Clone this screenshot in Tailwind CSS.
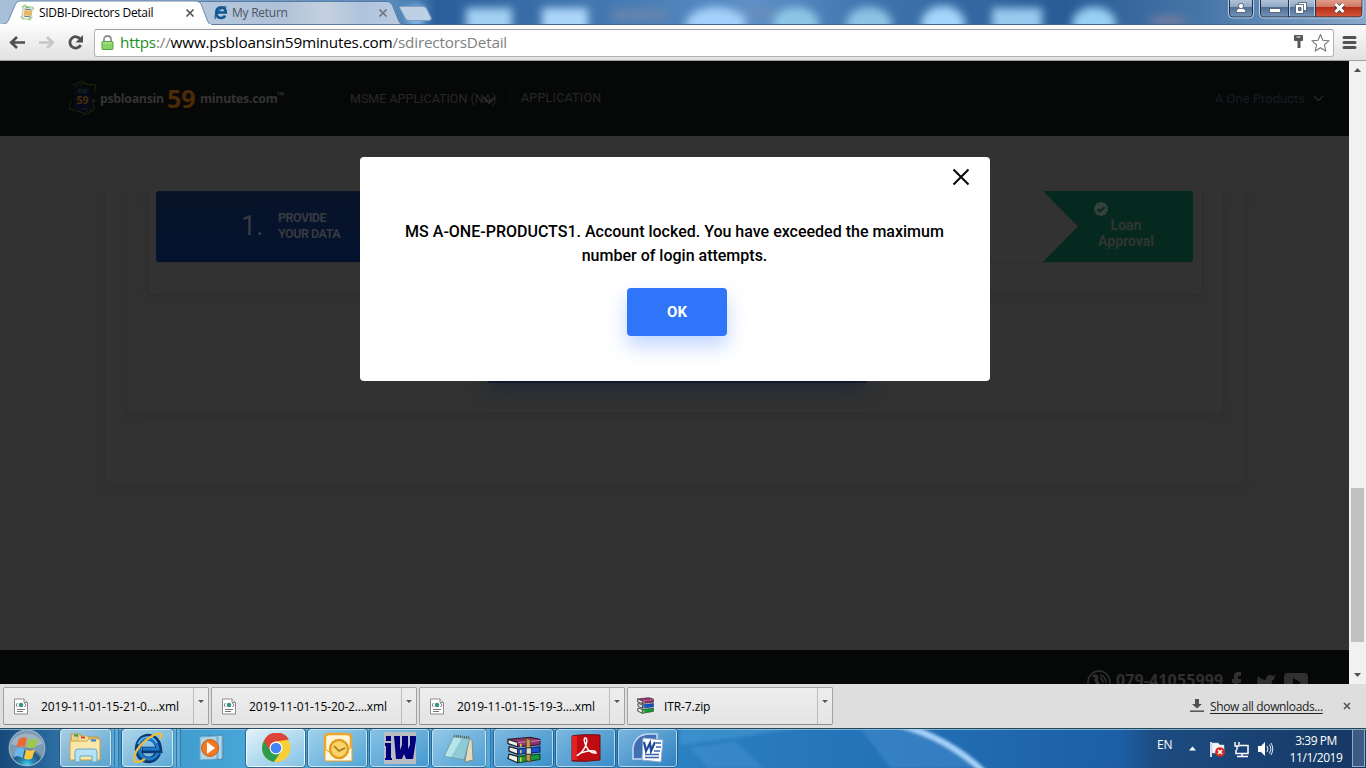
<!DOCTYPE html>
<html lang="en">
<head>
<meta charset="utf-8">
<title>SIDBI-Directors Detail</title>
<script src="https://cdn.jsdelivr.net/npm/@tailwindcss/browser@4"></script>
</head>
<body class="w-[1366px] h-[768px] overflow-hidden flex flex-col font-['Open_Sans','Noto_Sans',sans-serif] text-black">

<!-- window title bar -->
<header class="relative h-[25px] shrink-0 overflow-hidden bg-linear-to-r from-[#8fb0d0] via-[#3c72ac] to-[#4f80b4]">
  <svg class="absolute inset-0" width="1366" height="25" viewBox="0 0 1366 25">
    <defs>
      <filter id="soft" x="-30%" y="-80%" width="160%" height="260%"><feGaussianBlur stdDeviation="4.500"/></filter>
      <linearGradient id="tb" x1="0" x2="1"><stop offset="0" stop-color="#a8c0d8"/><stop offset=".29" stop-color="#5688ba"/><stop offset=".32" stop-color="#2b5f9b"/><stop offset=".45" stop-color="#4579b2"/><stop offset=".55" stop-color="#5d8fc6"/><stop offset=".64" stop-color="#3f74ad"/><stop offset=".78" stop-color="#295b95"/><stop offset=".88" stop-color="#4675a8"/><stop offset="1" stop-color="#8aa9c9"/></linearGradient>
      <linearGradient id="tab2" x1="0" x2="1"><stop offset="0" stop-color="#b4c8dd"/><stop offset=".4" stop-color="#afc1d8"/><stop offset=".62" stop-color="#c4d0df"/><stop offset=".8" stop-color="#afc3dd"/><stop offset="1" stop-color="#b8cbe0"/></linearGradient>
      <linearGradient id="btn" x1="0" x2="0" y1="0" y2="1"><stop offset="0" stop-color="#b5c6da"/><stop offset=".42" stop-color="#91a9c5"/><stop offset=".45" stop-color="#4f6e96"/><stop offset="1" stop-color="#7795b9"/></linearGradient>
      <linearGradient id="cls" x1="0" x2="0" y1="0" y2="1"><stop offset="0" stop-color="#e2a08e"/><stop offset=".42" stop-color="#d07a66"/><stop offset=".45" stop-color="#b52c18"/><stop offset="1" stop-color="#d4583a"/></linearGradient>
    </defs>
    <rect width="1366" height="25" fill="url(#tb)"/>
    <g filter="url(#soft)">
      <rect x="408" y="5" width="16" height="22" fill="#88bff0"/>
      <rect x="466" y="8" width="46" height="28" fill="#a2d0f2"/>
      <rect x="542" y="8" width="46" height="28" fill="#acd5fa"/>
      <rect x="612" y="9" width="54" height="12" fill="#6585ae"/>
      <rect x="740" y="9" width="36" height="8" fill="#6b8fb9"/>
      <ellipse cx="716" cy="24" rx="30" ry="17" fill="#a3d0fa"/>
      <ellipse cx="796" cy="24" rx="23" ry="17" fill="#8cc6e6"/>
      <ellipse cx="869" cy="24" rx="23" ry="17" fill="#8cc2e4"/>
      <ellipse cx="943" cy="24" rx="22" ry="18" fill="#a5d5fb"/>
      <rect x="992" y="8" width="50" height="28" fill="#9acaf0"/>
      <ellipse cx="1094" cy="24" rx="22" ry="17" fill="#98d0f4"/>
      <ellipse cx="1168" cy="21" rx="20" ry="6" fill="#6d7ba0"/>
    </g>
    <path d="M0 24.500H1366" stroke="#47658a"/>
    <path d="M400 6.500H423q3 0 4 3l4 8q1 3-2 3H409q-3 0-4-3l-5-9q-1-2 0-2z" fill="#bdd0e5" stroke="#7f9fbe"/>
    <path d="M199 1.500H387q4 0 5.500 4l6.500 16q1.500 3 4 3H207L199 2z" fill="url(#tab2)" stroke="#5c7da3"/>
    <path d="M0 25v-.5h2q5 0 6.500-4L15 5q1.500-4 5-4H196q4 0 5.500 4l6 16q1.500 4 5 4z" fill="#fff" stroke="#6e8cad"/>
    <rect x="0" y="24" width="211" height="1" fill="#fcfcfc"/>
    <!-- site favicon -->
    <g transform="rotate(8 27 13)" fill="none"><rect x="22.500" y="6.500" width="9" height="12.500" fill="#f4f7ef" stroke="#a5cd95"/><path d="M21 8l4-3M33 9l-1-3M21 17l4 3M33 16l-4 4" stroke="#9acb87"/><rect x="24" y="10.500" width="7" height="5" fill="#f3b25e"/><path d="M24 9.500h7M24 16.500h7" stroke="#68708a"/><path d="M24.500 7.500h5" stroke="#70b46f"/></g>
    <!-- Internet Explorer favicon -->
    <path d="M225 15.500q-1 2.500-4 2.500-4.500 0-4.800-5.500 .3-5 5-5.100 4.300 0 4.600 5.100h-9" fill="none" stroke="#12568e" stroke-width="2.600"/>
    <path d="M215.500 19q-2-3 3-8 5-5 8-4" fill="none" stroke="#12568e" stroke-width="1.200"/>
    <path d="M186.500 9.500l7 7m0-7l-7 7" stroke="#555" stroke-width="1.700"/>
    <path d="M379.500 9.500l7 7m0-7l-7 7" stroke="#6c7480" stroke-width="1.700"/>
    <!-- window buttons -->
    <g stroke="#22344c">
      <path d="M1229.500-1V14q0 3 3 3h17q3 0 3-3V-1z" fill="url(#btn)"/>
      <path d="M1260.500-1V14q0 3 3 3H1289V-1z" fill="url(#btn)"/>
      <path d="M1288.500-1V17H1315.500V-1z" fill="url(#btn)"/>
      <path d="M1315.500-1V17H1359q3 0 3-3V-1z" fill="url(#cls)"/>
    </g>
    <path d="M1228.500 0V14q0 4 4 4h17q4 0 4-4V0M1259.500 0V14q0 4 4 4h95q4 0 4.500-4V0M1289.500 0V16M1314.500 0V16" fill="none" stroke="#d8e6f3" stroke-opacity=".75"/>
    <g fill="#fff" stroke="#47566c" stroke-width=".8"><path d="M1236.500 12.500v-2q1-2.500 4.500-2.500t4.500 2.500v2z"/><circle cx="1241" cy="6" r="2.600"/><rect x="1269.500" y="8.500" width="11" height="4"/><path d="M1298.500 2.500h8v8h-8z"/><path d="M1295.500 4.500h8v9h-8z"/><path d="M1298.500 7.500h2.500v3h-2.500z" fill="#5c7698"/></g>
    <path d="M1335.500 4.500l8 7.500m0-7.500l-8 7.500" stroke="#514047" stroke-width="4.600"/><path d="M1335.500 4l8 8m0-8l-8 8" stroke="#fff" stroke-width="2.900"/>
  </svg>
  <div class="relative flex items-center h-[25px] text-[12px] leading-[25px] whitespace-nowrap">
    <span class="ml-[39px] w-[193px] tracking-[-0.28px]">SIDBI-Directors Detail</span>
    <span class="text-[#4d5560] tracking-[-0.25px]">My Return</span>
  </div>
</header>

<!-- address toolbar -->
<div class="h-[36px] shrink-0 flex items-center bg-linear-to-b from-[#fcfcfc] to-[#e1e1e1] border-b border-[#a0a0a0]">
  <svg width="94" height="35" viewBox="0 0 94 35" fill="none">
    <path d="M25 17.500H12M17 12l-5.800 5.500L17 23" stroke="#505050" stroke-width="2.700"/>
    <path d="M39 17.500H52M47 12l5.800 5.500L47 23" stroke="#c6c6c6" stroke-width="2.700"/>
    <path d="M80.500 14.500A5.700 5.700 0 1 0 80.700 20" stroke="#505050" stroke-width="2.800"/><path d="M83 10v7.500h-7.500z" fill="#505050"/>
  </svg>
  <div class="w-[1240px] h-[28px] flex items-center bg-white border border-[#b4b4b4] border-t-[#9c9c9c] rounded-[3px]">
    <svg class="ml-[6px] mr-[6px]" width="13" height="18" viewBox="0 0 13 18"><path d="M3 8V5.500Q3 2 6.500 2T10 5.500V8" fill="none" stroke="#929292" stroke-width="1.800"/><rect x="1" y="7.500" width="11" height="8" rx=".8" fill="#8bd267" stroke="#57a33f"/><path d="M2 9h9" stroke="#b8e99e"/></svg>
    <div class="flex-1 -mt-[2px] text-[15.300px] leading-[26px] tracking-[-0.2px] whitespace-nowrap text-[#808080]"><span class="text-[#1b911b]">https</span>://<span class="text-black">www.psbloansin59minutes.com</span>/sdirectorsDetail</div>
    <svg class="mr-[-1px]" width="42" height="26" viewBox="0 0 42 26"><path d="M2 6q0-1 1-1h7q1 0 1 1v4q0 1-1 1H8.500v7h-3v-7H3q-1 0-1-1z" fill="#555"/><path d="M4.500 7h4" stroke="#fff"/><path d="M28.500 4.500l2.400 5.700 6.200.5-4.700 4.100 1.400 6.200-5.300-3.300-5.300 3.300 1.400-6.200-4.700-4.100 6.200-.5z" fill="#fff" stroke="#777" stroke-width="1.100" stroke-linejoin="round"/></svg>
  </div>
  <svg width="32" height="35" viewBox="0 0 32 35"><path d="M10 12.500H21M10 17.500H21M10 22.500H21" stroke="#525252" stroke-width="3" stroke-linecap="round"/></svg>
</div>

<!-- web page under the dimming overlay -->
<div class="relative h-[623px] shrink-0 flex font-[Roboto,sans-serif]">
  <main class="w-[1349px] flex flex-col bg-[#323232] overflow-hidden">
    <nav class="h-[75px] shrink-0 bg-[#060807] flex items-center text-[12.500px] text-[#28272b] whitespace-nowrap">
      <svg class="ml-[68px]" width="30" height="40" viewBox="0 0 30 40" fill="none"><g stroke="#17250f"><path d="M4 6L15 2l2 3 11 1-2 8M3 22l-2 8 12 3 3 3 10-5-1-8"/><path d="M6 8l9-4 10 3M4 30l12 4 8-4" stroke-dasharray="2 1"/></g><rect x="6.500" y="8" width="16" height="24" rx="2" fill="#080a19"/><path d="M14 30h6" stroke="#0d2213" stroke-width="1.500"/><path d="M24 20l3 3m0-3l-3 3" stroke="#27351e"/><text x="10" y="13.500" font-size="5" font-weight="700" fill="#102d17" font-family="Open Sans">PSB</text><text x="8.500" y="25" font-size="10.500" font-weight="700" fill="#4b2c09" font-family="Open Sans">59</text></svg>
      <div class="mt-[2px] flex items-center font-['Open_Sans',sans-serif] font-bold text-[12.300px] text-[#343436]">
        <span class="ml-[2px] w-[67px] tracking-[-0.27px]">psbloansin</span>
        <span class="w-[33px] -mt-[4px] text-[25px] leading-[30px] text-[#4b2b06]">59</span>
        <span class="w-[77px] tracking-[-0.25px]">minutes.com</span><span class="text-[10px] -mt-[8px] w-[10px]">™</span>
      </div>
      <div class="ml-[63px] mt-[2px] w-[161px] flex items-center border-r border-[#0c0e0d]"><span class="w-[131px]">MSME APPLICATION (NA)</span><svg width="16" height="10" viewBox="0 0 16 10"><path d="M2 2l6 6 6-6" fill="none" stroke="#2f2f31" stroke-width="1.600"/></svg></div>
      <span class="ml-[10px] -mt-[1px] tracking-[0.22px]">APPLICATION</span>
      <span class="ml-auto text-[13px] text-[#191b25]">A One Products</span>
      <svg class="ml-[7px] mr-[24px]" width="13" height="9" viewBox="0 0 13 9"><path d="M2 2l4.500 4.500L11 2" fill="none" stroke="#25272d" stroke-width="1.300"/></svg>
    </nav>

    <section class="mt-[55px] h-[459px] shrink-0 overflow-hidden">
      <div class="ml-[105px] w-[1140px] h-[294px] px-[20px] border border-t-0 border-[#2e2e2e] rounded-b-[4px] shadow-[0_3px_9px_#303030]">
        <div class="h-[223px] w-[1098px] px-[20px] border border-t-0 border-[#2d2d2d] rounded-b-[4px] shadow-[0_3px_9px_#303030] flex flex-col">
          <div class="h-[104px] w-[1056px] px-[8px] border border-t-0 border-[#2c2c2c] rounded-b-[4px] shadow-[0_3px_9px_#303030]">
            <div class="h-[72px] w-[1037px] flex items-stretch border-b border-[#2c2c2c] text-[#373a40]">
              <div class="w-[300px] h-[71px] pl-[85px] flex items-center rounded-[3px] bg-linear-to-b from-[#081328] to-[#04122e]">
                <span class="w-[37px] text-[27px] leading-[30px] -mt-px">1.</span>
                <span class="-mt-[2px] text-[12.500px] leading-[16px] font-bold tracking-[-0.5px]">PROVIDE<br>YOUR DATA</span>
              </div>
              <div class="relative ml-auto w-[150px] h-[71px] pt-[10px] pl-[50px] text-[#303532]">
                <svg class="absolute left-0 top-0" width="150" height="71" viewBox="0 0 150 71"><path d="M0 0H147q3 0 3 3V68q0 3-3 3H0L35 35.500z" fill="#05291e"/></svg>
                <svg class="relative" width="16" height="16" viewBox="0 0 16 16"><circle cx="8" cy="8" r="6.500" fill="#34423d" stroke="#34423d" stroke-width="1.200" stroke-dasharray="3 1"/><path d="M4.500 8l2.500 2.500 4.500-4.500" fill="none" stroke="#05291e" stroke-width="1.800"/></svg>
                <div class="relative w-[66px] text-center text-[14px] leading-[16px] font-bold">Loan<br>Approval</div>
              </div>
            </div>
          </div>
          <div class="mt-[38px] ml-[341px] w-[378px] h-[50px] bg-[#0d1a30] shadow-[0_8px_20px_#222a36]"></div>
        </div>
      </div>
    </section>

    <footer class="h-[34px] shrink-0 bg-[#060807] overflow-hidden flex items-start pl-[1086px] text-[#2f2f30]">
      <svg class="mt-[19px] shrink-0" width="27" height="26" viewBox="0 0 27 26" fill="none" stroke="#303030"><circle cx="13" cy="13" r="11" stroke-width="1.500"/><path d="M7 8q3-3 4 1l-1 2q1 4 5 6" stroke-width="3"/><path d="M14 6q6 1 6 8M14 9q3 1 3 5" stroke-width="1.400"/></svg>
      <span class="ml-[3px] mt-[19px] text-[16px] leading-[22px] font-bold font-['Open_Sans',sans-serif] w-[114px] tracking-[0.12px]">079-41055999</span>
      <svg class="mt-[21px] shrink-0" width="80" height="26" viewBox="0 0 80 26" fill="#303030"><path d="M11 1H8Q4 1 4 5v3H2v4h2v9h4v-9h3V8H8V5h3zM28 5q4 4 8 4 0-5 4-5 2 0 3 1l3-1-2 3h1l-3 3q-1 12-15 10l4-3-3-3-1-3z"/><path fill-rule="evenodd" d="M58 2H74q4 0 4 4V18q0 4-4 4H58q-4 0-4-4V6q0-4 4-4zM63 7v9l8-4.500z"/></svg>
    </footer>
  </main>

  <!-- page scrollbar -->
  <aside class="w-[17px] bg-[#f1f1f1] flex flex-col items-center">
    <svg class="mt-[6px]" width="9" height="6" viewBox="0 0 9 6"><path d="M4.500 1L8 5H1z" fill="#505050"/></svg>
    <div class="mt-[415px] w-[13px] h-[154px] bg-[#c1c1c1]"></div>
    <svg class="mt-[30px]" width="9" height="6" viewBox="0 0 9 6"><path d="M4.500 5L8 1H1z" fill="#505050"/></svg>
  </aside>

  <!-- account locked dialog -->
  <div role="dialog" class="absolute left-[360px] top-[96px] w-[630px] h-[224px] bg-white rounded-[4px] flex flex-col items-center">
    <button aria-label="Close" class="self-end mt-[11px] mr-[20px] h-[18px]"><svg width="18" height="18" viewBox="0 0 18 18"><path d="M1.500 1.500l15 15m0-15l-15 15" stroke="#080808" stroke-width="2"/></svg></button>
    <p class="mt-[34px] mr-[1px] w-[560px] h-[48px] text-center text-[16px] leading-[24px] font-medium text-black">MS A-ONE-PRODUCTS1. Account locked. You have exceeded the maximum<br>number of login attempts.</p>
    <button class="mt-[20px] ml-[4px] w-[100px] h-[48px] rounded-[4px] bg-[#2e75fa] text-white font-bold text-[15px] shadow-[0_10px_20px_rgba(46,117,250,0.3)]">OK</button>
  </div>
</div>

<!-- downloads shelf -->
<div class="h-[44px] shrink-0 bg-[#dedede] flex items-center pl-[3px] text-[12px] whitespace-nowrap">
  <svg class="absolute" width="0" height="0"><defs>
    <symbol id="xml" viewBox="0 0 16 17"><path d="M1.500 1h9.500l3.500 3.500V16h-13z" fill="#fff" stroke="#8b8b8b"/><path d="M11 1v3.500h3.500" fill="#eee" stroke="#8b8b8b"/><path d="M4.500 5L3 7l1.500 2M11.500 5L13 7l-1.500 2" fill="none" stroke="#777"/><circle cx="8" cy="7" r="2.300" fill="#3a8f88"/><path d="M4 11.500h8M4 13.500h6" stroke="#777"/></symbol>
    <symbol id="rar" viewBox="0 0 32 26" preserveAspectRatio="none"><path d="M1 3L22 1l9 2v5L10 10 1 7z" fill="#8d3470" stroke="#33142b"/><path d="M1 3l9 3v4L1 7z" fill="#eee" stroke="#222"/><path d="M10 6l21-2" stroke="#d982b3"/><path d="M2 10l8 2 21-2v5l-21 2-8-3z" fill="#1450d2" stroke="#10245a"/><path d="M2 10l8 2v5l-8-3z" fill="#eee" stroke="#222"/><path d="M2 17l8 2 21-2v5l-21 3-9-4z" fill="#179a3d" stroke="#0b421c"/><path d="M2 17l8 2v6l-9-4z" fill="#eee" stroke="#222"/><path d="M13 7v3M13 13v3M13 20v4" stroke="#e3c84b" stroke-width="1.500"/></symbol>
  </defs></svg>
  <div class="w-[206px] h-[38px] mr-[2px] flex border border-[#a3a3a3] border-b-[#8c8c8c] rounded-[2px] bg-linear-to-b from-[#eeeeee] to-[#e4e4e4]"><div class="w-[190px] pl-[9px] flex items-center border-r border-[#bcbcbc]"><svg width="16" height="17"><use href="#xml"/></svg><span class="ml-[12px] mt-px tracking-[-0.15px]">2019-11-01-15-21-0....xml</span></div><svg width="14" height="36" viewBox="0 0 14 36"><path d="M4 12h6l-3 3z" fill="#555"/></svg></div>
  <div class="w-[206px] h-[38px] mr-[2px] flex border border-[#a3a3a3] border-b-[#8c8c8c] rounded-[2px] bg-linear-to-b from-[#eeeeee] to-[#e4e4e4]"><div class="w-[190px] pl-[9px] flex items-center border-r border-[#bcbcbc]"><svg width="16" height="17"><use href="#xml"/></svg><span class="ml-[12px] mt-px tracking-[-0.15px]">2019-11-01-15-20-2....xml</span></div><svg width="14" height="36" viewBox="0 0 14 36"><path d="M4 12h6l-3 3z" fill="#555"/></svg></div>
  <div class="w-[206px] h-[38px] mr-[2px] flex border border-[#a3a3a3] border-b-[#8c8c8c] rounded-[2px] bg-linear-to-b from-[#eeeeee] to-[#e4e4e4]"><div class="w-[190px] pl-[9px] flex items-center border-r border-[#bcbcbc]"><svg width="16" height="17"><use href="#xml"/></svg><span class="ml-[12px] mt-px tracking-[-0.15px]">2019-11-01-15-19-3....xml</span></div><svg width="14" height="36" viewBox="0 0 14 36"><path d="M4 12h6l-3 3z" fill="#555"/></svg></div>
  <div class="w-[206px] h-[38px] flex border border-[#a3a3a3] border-b-[#8c8c8c] rounded-[2px] bg-linear-to-b from-[#eeeeee] to-[#e4e4e4]"><div class="w-[190px] pl-[9px] flex items-center border-r border-[#bcbcbc]"><svg class="-mt-[2px]" width="17" height="17"><use href="#rar" width="17" height="17"/></svg><span class="ml-[10px] mt-px tracking-[-0.1px]">ITR-7.zip</span></div><svg width="14" height="36" viewBox="0 0 14 36"><path d="M4 12h6l-3 3z" fill="#555"/></svg></div>
  <svg class="ml-auto mr-[6px]" width="14" height="14" viewBox="0 0 14 14"><path d="M5 0h4v5h3L7 9.500 2 5h3z" fill="#505050"/><path d="M0 12.200h14" stroke="#505050" stroke-width="1.500"/></svg>
  <a class="w-[113px] mt-px underline underline-offset-2 text-[#222] tracking-[-0.35px]">Show all downloads...</a>
  <svg class="ml-[20px] mr-[15px]" width="8" height="8" viewBox="0 0 8 8"><path d="M1 1l6 6m0-6L1 7" stroke="#555" stroke-width="1.600"/></svg>
</div>

<!-- Windows taskbar -->
<footer class="relative h-[40px] shrink-0 overflow-hidden">
  <svg class="absolute inset-0" width="1366" height="40" viewBox="0 0 1366 40">
    <defs>
      <filter id="glow"><feGaussianBlur stdDeviation="1.800"/></filter>
      <linearGradient id="task" x1="0" x2="1"><stop offset="0" stop-color="#174a7c"/><stop offset=".045" stop-color="#2e71a6"/><stop offset=".09" stop-color="#3c95ca"/><stop offset=".2" stop-color="#4ba9da"/><stop offset=".4" stop-color="#3a90cd"/><stop offset=".5" stop-color="#2a80c1"/><stop offset=".65" stop-color="#2471b7"/><stop offset=".82" stop-color="#1c5fa6"/><stop offset=".845" stop-color="#1d4c82"/><stop offset="1" stop-color="#153762"/></linearGradient>
      <radialGradient id="orb" cx=".5" cy="1"><stop offset="0" stop-color="#4ee4fb"/><stop offset=".4" stop-color="#2685b4"/><stop offset=".8" stop-color="#235782"/><stop offset="1" stop-color="#7c9bb2"/></radialGradient>
    </defs>
    <rect width="1366" height="40" fill="url(#task)"/>
    <g filter="url(#glow)"><path d="M680 17l60-8 60-9H680z" fill="#56a6dc" opacity=".4"/><path d="M690 20l45-7 28 27h-55z" fill="#4d9bd4" opacity=".35"/><path d="M860 0h52q45 15 68 40h-90z" fill="#4f95d4" opacity=".4"/><path d="M900-3q48 13 84 47" fill="none" stroke="#a4d0f7" stroke-width="6"/></g>
    <path d="M0 .5H1366" stroke="#24475b"/><path d="M0 1.500H1366" stroke="#9ccbe2" opacity=".75"/>
    <!-- start button -->
    <circle cx="27" cy="20" r="17.800" fill="url(#orb)" stroke="#98b1c3" stroke-width="1.200"/><path d="M11 16a17 16 0 0 1 32 0q-16 6-32 0" fill="#fff" opacity=".25"/>
    <path d="M19 11q4-3 8-1l-2 9q-4-2-9 0z" fill="#ec6a32"/><path d="M28.500 11q5 2 10-1l-3 9q-4 2-9 0z" fill="#9cc94a"/><path d="M16 21q4-2 8.500 0l-2 9q-4-3-9-1z" fill="#6cb6ee"/><path d="M26 21.500q5 2 9 0l-3 9q-4 2-8 0z" fill="#fbc83b"/>
    <!-- notification icons and show desktop -->
    <path d="M1189 22.500l3.500-4 3.500 4z" fill="#fff"/>
    <path d="M1211 14v15" stroke="#fff" stroke-width="1.600"/><path d="M1212 15h6l2 2h4v8h-12z" fill="#f1f5f9" stroke="#c5ced8" stroke-width=".5"/><circle cx="1220" cy="24" r="4.800" fill="#d32c1f"/><path d="M1218 22l4 4m0-4l-4 4" stroke="#fff" stroke-width="1.600"/>
    <path d="M1240 17.500h8v8h-12V22M1242 26v2.500M1237 28.500h11" fill="none" stroke="#fff" stroke-width="1.500"/><path d="M1235 14v4h4v-4M1237 18v4" fill="none" stroke="#fff" stroke-width="1.400"/>
    <path d="M1258 18h3l4-4v14l-4-4h-3z" fill="#fff"/><path d="M1267 18q2 3 0 6M1269.500 16.500q3 4.500 0 9M1271 15q3.500 6 0 12" fill="none" stroke="#dfe9f3" stroke-width="1"/>
    <rect x="1352.500" y="1.500" width="12" height="37" fill="#6888ac" fill-opacity=".45" stroke="#90a8c2"/>
  </svg>
  <div class="relative flex h-[40px] pt-[1px] pl-[60px] items-start">
    <div class="w-[51px] h-[38px] rounded-[3px] border border-[#e0f2fb]/80 outline outline-[#1d5075]/70 bg-linear-to-br from-[#c9e5f2]/80 to-[#6db5dc]/60 flex justify-center items-center"><svg width="36" height="32" viewBox="0 0 36 32"><path d="M3 5V2h9l2 3h16v21H3z" fill="#ecd48a" stroke="#b89445"/><path d="M10 7V4h9l2 3h11v18H10z" fill="#f4e3a0" stroke="#c8a850" stroke-width=".7"/><path d="M2 9h17l2-2h11v21H2z" fill="#f8e7a7" stroke="#caa347"/><path d="M6 3.500h4" stroke="#2fa251" stroke-width="2"/><path d="M13 5.500h4" stroke="#d83e27" stroke-width="2"/><path d="M23 8.500h5" stroke="#367bd5" stroke-width="2"/><path d="M7 30V20q0-3 3-3h16q3 0 3 3v10h-5v-6H12v6z" fill="#b7e1f4" stroke="#65a8cc"/></svg></div>
    <div class="w-[8px] h-[38px] flex border-r border-[#2f7aa9] bg-[#79bce0]/50"><i class="ml-[3px] w-px bg-[#2f7aa9]"></i></div>
    <div class="ml-[3px] w-[51px] h-[38px] rounded-[3px] border border-[#e0f2fb]/80 outline outline-[#1d5075]/70 bg-linear-to-br from-[#c9e5f2]/80 to-[#6db5dc]/60 flex justify-center items-center"><svg width="36" height="34" viewBox="0 0 36 34" fill="none"><path d="M28 22q-3 7-10 7-9-1-10-11Q9 7 18 6q10 1 11 13H12" stroke="#0b3975" stroke-width="6.500"/><path d="M28 22q-3 6-10 6-8-1-9-10 1-9 9-10 9 1 10 10H13" stroke="#1b7bc8" stroke-width="3"/><path d="M8 13q3-7 10-7 6 0 9 6" stroke="#65b9ea" stroke-width="1.600"/><path d="M30 8q4-8-6-4Q14 9 7 19 1 31 7 31q4 0 8-3" stroke="#f0bd34" stroke-width="2.200"/></svg></div>
    <div class="w-[8px] h-[38px] flex border-r border-[#2f7aa9] bg-[#79bce0]/50"><i class="ml-[3px] w-px bg-[#2f7aa9]"></i></div>
    <div class="ml-[3px] w-[55px] h-[38px] flex justify-center items-center"><svg width="34" height="32" viewBox="0 0 34 32"><path d="M6 4l22-1v24L6 28z" fill="#8dc0dc" stroke="#4887b0"/><path d="M25 4v23" stroke="#d8eff8"/><path d="M5 5l17-1v23L5 28z" fill="#acd7e9" stroke="#6da8c9"/><circle cx="15" cy="16" r="8.500" fill="#f27921" stroke="#d15d12"/><path d="M12 10l8 6-8 6z" fill="#fff"/></svg></div>
    <div class="ml-[7px] w-[59px] h-[38px] rounded-[3px] border border-[#f4fbfe] outline outline-[#1d5075]/70 bg-linear-to-br from-[#eaf6fa]/95 to-[#91c9e8]/80 flex justify-center items-center"><svg width="30" height="30" viewBox="0 0 30 30"><circle cx="15" cy="15" r="14" fill="#f5c92c"/><path d="M2.900 8A14 14 0 0 0 13 28.900L20 18.500 15 15z" fill="#2a9c4d"/><path d="M2.900 8a14 14 0 0 1 25-1.500L15 8.500l-6 9z" fill="#db4437"/><path d="M15 8.500h13.200a14 14 0 0 1 .3 11A14 14 0 0 1 13 28.900l7.500-10.500z" fill="#f8cf36"/><circle cx="15" cy="15" r="6.500" fill="#fff"/><circle cx="15" cy="15" r="5.300" fill="#4285f4"/></svg></div>
    <div class="ml-[3px] w-[59px] h-[38px] rounded-[3px] border border-[#d5edfa]/80 outline outline-[#1d5075]/70 bg-linear-to-br from-[#b7dbef]/80 to-[#5ba9d6]/60 flex justify-center items-center"><svg width="34" height="34" viewBox="0 0 34 34"><path d="M8 3h18q4 0 4 4v17H4V7q0-4 4-4z" fill="#fff6d8" stroke="#eea72d" stroke-width="2.500"/><path d="M4 18l12 8 15-10v14H4z" fill="#fff8e1" stroke="#e3a12d"/><circle cx="18" cy="18" r="9" fill="#f9d467" stroke="#e49c1d" stroke-width="2.500"/><path d="M13 15l5 5 6-3" fill="none" stroke="#a87522" stroke-width="1.700"/></svg></div>
    <div class="ml-[3px] w-[59px] h-[38px] rounded-[3px] border border-[#d5edfa]/70 outline outline-[#1d5075]/70 bg-linear-to-br from-[#98c9e5]/80 to-[#4598ce]/60 flex justify-center items-center"><svg width="32" height="32" viewBox="0 0 32 32"><path d="M0 0h32v32H0z" fill="#b9bdc2"/><path d="M2 4h5v5H2zM1 11h6v15h1v2H1v-2h1V14H1z" fill="#00007f"/><path d="M10 4h6v14l2-5V4h6v13l2-4V4h6v4l-3 19h-7l-2-5-2 5h-6z" fill="#00007f"/></svg></div>
    <div class="ml-[3px] w-[54px] h-[38px] rounded-[3px] border border-[#d5edfa]/80 outline outline-[#1d5075]/70 bg-linear-to-br from-[#b7dbef]/70 to-[#5ba9d6]/60 flex justify-center items-center"><svg width="32" height="32" viewBox="0 0 32 32"><path d="M26 6l3 2 1 20-8 2z" fill="#e3dcc0" stroke="#827856" stroke-width=".7"/><path d="M11 4l16 2-6 22-20-4z" fill="#8fcbd5" stroke="#6795a1" stroke-width=".8"/><path d="M11 5l8 1-11 19-6-1z" fill="#b7e4e8"/><path d="M11 4l16 2" stroke="#60686b" stroke-width="3" stroke-dasharray="1 1"/></svg></div>
    <div class="w-[5px] h-[38px] border-r border-[#2f7aa9] bg-[#79bce0]/50"></div>
    <div class="ml-[3px] w-[59px] h-[38px] rounded-[3px] border border-[#d5edfa]/70 outline outline-[#1d5075]/70 bg-linear-to-br from-[#98c9e5]/70 to-[#3c91c9]/60 flex justify-center items-center"><svg class="mt-[3px]" width="34" height="28" viewBox="0 0 32 26"><use href="#rar" width="32" height="26"/><path d="M18 2l4 1v21l-4-1z" fill="#c79a51" stroke="#69441c"/><rect x="18" y="11" width="5" height="6" fill="#ddd" stroke="#333"/></svg></div>
    <div class="ml-[3px] w-[59px] h-[38px] rounded-[3px] border border-[#d5edfa]/70 outline outline-[#1d5075]/70 bg-linear-to-br from-[#98c9e5]/70 to-[#3c91c9]/60 flex justify-center items-center"><svg width="32" height="30" viewBox="0 0 32 30"><path d="M2 3q10-2 28-1v25q-14 2-28 1z" fill="#be0c12" stroke="#750b0f"/><path d="M2 3h5v24H2z" fill="#e32120"/><path d="M8 22q5-3 8-10 2-7-1-7-2 1 1 8 4 8 10 7 0-3-8-2Q8 20 7 23" fill="none" stroke="#fff" stroke-width="1.500"/></svg></div>
    <div class="ml-[3px] w-[59px] h-[38px] rounded-[3px] border border-[#d5edfa]/70 outline outline-[#1d5075]/70 bg-linear-to-br from-[#98c9e5]/70 to-[#2d84c1]/60 flex justify-center items-center"><svg width="32" height="32" viewBox="0 0 32 32"><path d="M1 27V16Q3 3 16 2h9v21q-6 6-14 4z" fill="#426eb4" stroke="#c8dcf2" stroke-width="1.500"/><path d="M11 6l20 2-2 22-19-2z" fill="#fff" stroke="#91abd1"/><path d="M12 10l2 9 4-8 1 8 4-9" fill="none" stroke="#1d4b9a" stroke-width="2.200"/><path d="M24 11h5M24 15h5M22 19h6M13 22.500h14M13 25.500h14" stroke="#3665a9" stroke-width="1.300"/></svg></div>
    <span class="ml-[480px] mt-[8px] text-[12px] leading-[16px] text-white tracking-[-0.2px]">EN</span>
    <div class="ml-auto mr-[23px] mt-[3px] w-[54px] text-center text-[12px] leading-[17px] text-white tracking-[-0.45px] whitespace-nowrap">3:39 PM<br>11/1/2019</div>
  </div>
</footer>
</body>
</html>
